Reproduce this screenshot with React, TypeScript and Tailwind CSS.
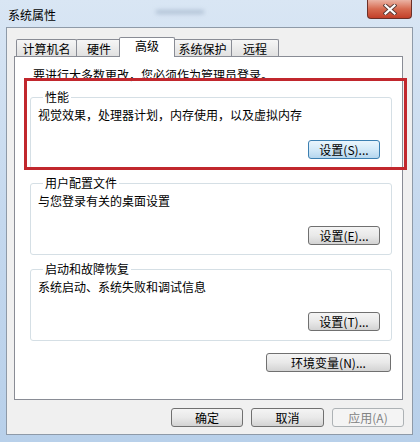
const btn =
  "h-[19px] rounded-[3px] border border-[#707070] bg-gradient-to-b from-[#f4f4f4] via-[#e9e9e9] to-[#d3d3d3] text-[12px] leading-[14px] flex items-center justify-center";

function GroupBox({
  title,
  text,
  button,
  focused,
}: {
  title: string;
  text: string;
  button: string;
  focused?: boolean;
}) {
  return (
    <fieldset className="border border-[#d5dfe5] rounded-[3px] pl-[7px] pr-[11px] pb-[9px]">
      <legend className="ml-[5px] px-[2px] leading-[14px]">{title}</legend>
      <div className="mt-[4px] leading-[14px]">{text}</div>
      <div className="flex justify-end mt-[18px]">
        <button
          className={
            focused
              ? "w-[72px] h-[19px] rounded-[3px] border border-[#3c7fb1] bg-gradient-to-b from-[#eaf5fc] via-[#d3e9f8] to-[#b5d6ee] leading-[14px] flex items-center justify-center"
              : "w-[72px] " + btn
          }
        >
          {button}
        </button>
      </div>
    </fieldset>
  );
}

function Tab({ label, active, w, ml }: { label: string; active?: boolean; w: string; ml: string }) {
  if (active)
    return (
      <div
        className={`${w} ${ml} relative z-10 h-[20px] -mb-px bg-white border-t border-l border-r border-[#898c95] rounded-t-[2px] flex justify-center pt-[1px] leading-[14px]`}
      >
        {label}
      </div>
    );
  return (
    <div
      className={`${w} ${ml} h-[17px] bg-gradient-to-b from-[#f6f6f6] to-[#e1e1e1] border-t border-l border-r border-[#898c95] rounded-t-[2px] flex justify-center pt-[2px] leading-[14px]`}
    >
      {label}
    </div>
  );
}

export default function App() {
  return (
    <div className="w-[420px] h-[442px] relative overflow-hidden bg-gradient-to-b from-[#d9e6f4] via-[#c4d8ee] to-[#b8d0ea] flex flex-col font-['Noto_Sans_CJK_SC','Liberation_Sans',sans-serif] text-[12px] text-black">
      {/* title bar */}
      <div className="h-[27px] flex items-start shrink-0">
        <span className="ml-[8px] mt-[8px] leading-[14px]">系统属性</span>
        <div className="ml-[100px] mt-[10px] w-[48px] h-[4px] bg-[#9fb2c7] blur-[2px] opacity-70"></div>
        <button className="ml-auto mr-[8px] w-[45px] h-[19px] rounded-b-[4px] border border-t-0 border-[#6b3028] bg-gradient-to-b from-[#eab3a4] via-[#d66a50] to-[#c23f29] flex items-center justify-center">
          <svg width="14" height="11" viewBox="0 0 14 11">
            <path d="M2.5 1.5 L11.5 9.5 M11.5 1.5 L2.5 9.5" stroke="#5a3b36" strokeWidth="4" strokeLinecap="square" />
            <path d="M2.5 1.5 L11.5 9.5 M11.5 1.5 L2.5 9.5" stroke="#ffffff" strokeWidth="2.2" strokeLinecap="square" />
          </svg>
        </button>
      </div>

      {/* client area */}
      <div className="ml-[6px] mr-[7px] h-[408px] shrink-0 border border-[#8e9aa8] bg-[#f0f0f0] flex flex-col pt-[9px] pl-[7px] pr-[9px]">
        <div className="flex items-end h-[19px] pl-[2px]">
          <Tab label="计算机名" w="w-[61px]" ml="ml-0" />
          <Tab label="硬件" w="w-[46px]" ml="-ml-px" />
          <Tab label="高级" active w="w-[56px]" ml="-ml-[3px]" />
          <Tab label="系统保护" w="w-[59px]" ml="-ml-[2px]" />
          <Tab label="远程" w="w-[48px]" ml="-ml-px" />
        </div>
        <div className="h-[344px] border border-[#898c95] bg-white flex flex-col pt-[11px] pl-[15px] pr-[10px]">
          <div className="ml-[3px] leading-[14px]">要进行大多数更改，您必须作为管理员登录。</div>
          <div className="mt-[8px] flex flex-col gap-[7px]">
            <GroupBox title="性能" text="视觉效果，处理器计划，内存使用，以及虚拟内存" button="设置(S)..." focused />
            <GroupBox title="用户配置文件" text="与您登录有关的桌面设置" button="设置(E)..." />
            <GroupBox title="启动和故障恢复" text="系统启动、系统失败和调试信息" button="设置(T)..." />
          </div>
          <div className="flex justify-end mt-[12px] mr-px">
            <button className={"w-[125px] " + btn}>环境变量(N)...</button>
          </div>
        </div>
        <div className="flex justify-end gap-[8px] mt-[8px] -mr-px">
          <button className={"w-[72px] " + btn}>确定</button>
          <button className={"w-[73px] " + btn}>取消</button>
          <button className="w-[72px] h-[19px] rounded-[3px] border border-[#adb2b5] bg-[#f4f4f4] text-[#838383] leading-[14px] flex items-center justify-center">
            应用(A)
          </button>
        </div>
      </div>

      {/* red highlight annotation */}
      <div className="absolute left-[24px] top-[78px] w-[383px] h-[92px] border-[3px] border-[#c1272d] pointer-events-none"></div>
    </div>
  );
}
